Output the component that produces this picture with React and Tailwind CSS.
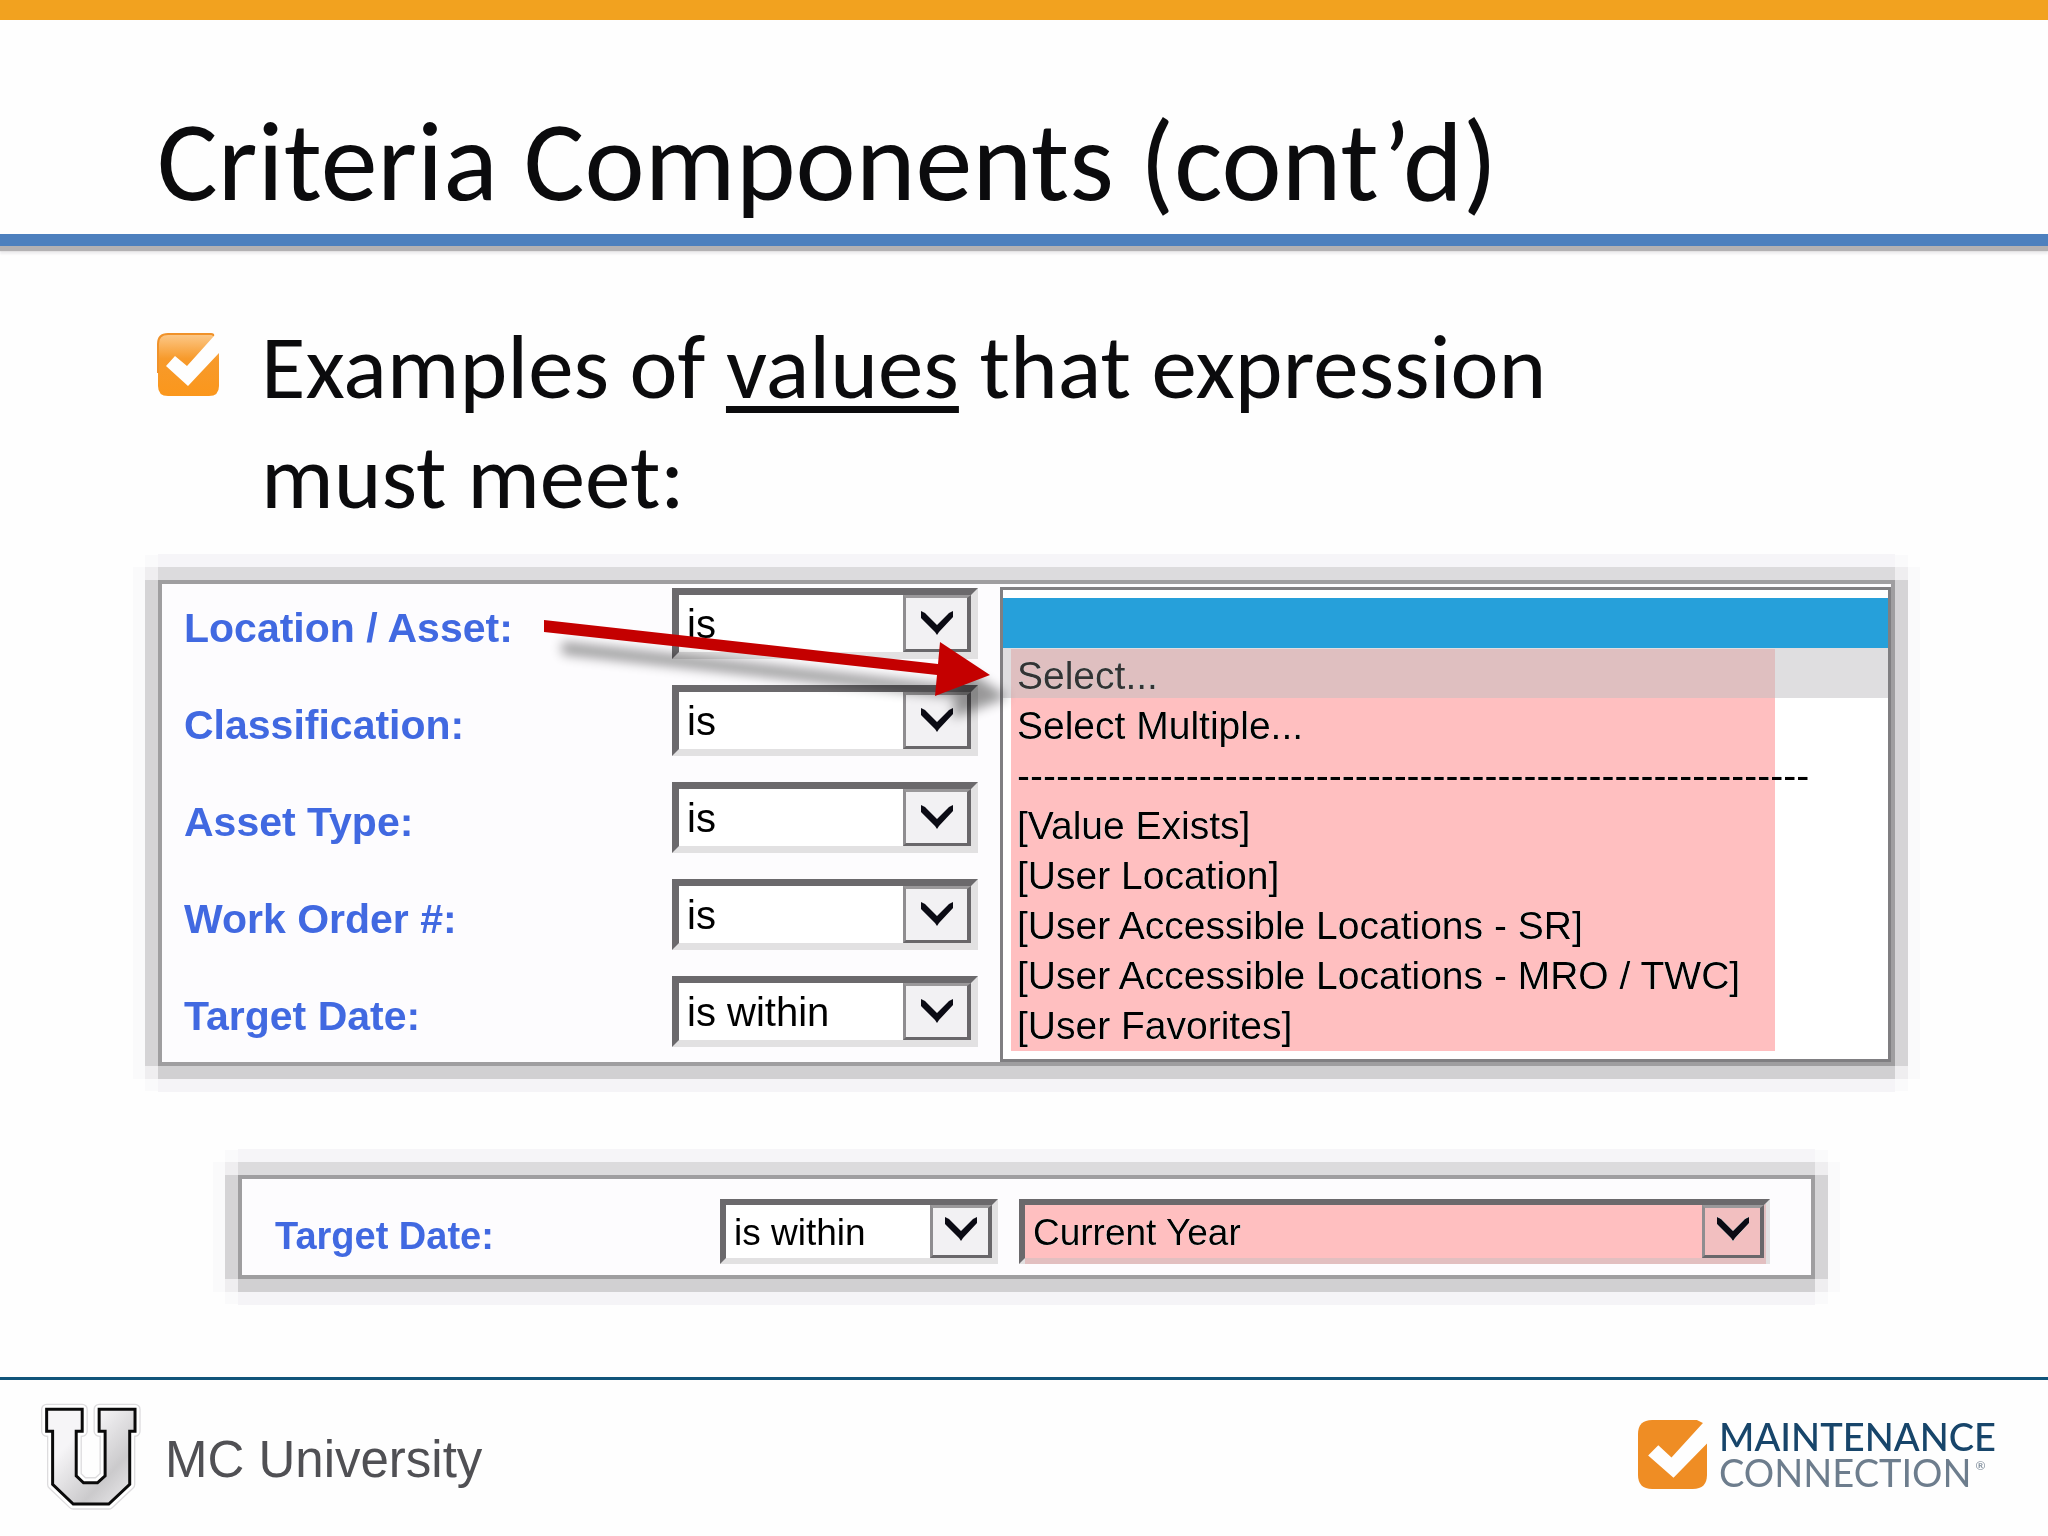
import clsx from 'clsx';

const criteria = [
  { id: 'location', label: 'Location / Asset:', value: 'is' },
  { id: 'classification', label: 'Classification:', value: 'is' },
  { id: 'asset-type', label: 'Asset Type:', value: 'is' },
  { id: 'work-order', label: 'Work Order #:', value: 'is' },
  { id: 'target-date', label: 'Target Date:', value: 'is within' },
];

const options = [
  '',
  'Select...',
  'Select Multiple...',
  '-'.repeat(61),
  '[Value Exists]',
  '[User Location]',
  '[User Accessible Locations - SR]',
  '[User Accessible Locations - MRO / TWC]',
  '[User Favorites]',
];

const Panel = ({ className, children }) => (
  <section
    className={clsx(
      'relative flex bg-[#fdfcfe] shadow-[0_0_0_4px_#9f9ea0,0_13px_0_4px_#d1d0d2,0_-13px_0_4px_#dcdbdd,13px_0_0_4px_#d5d4d6,-13px_0_0_4px_#d5d4d6,0_0_0_17px_#efeef0,0_26px_0_4px_#f5f4f7,0_-26px_0_4px_#f6f5f8,12px_0_0_17px_#fafafb,-12px_0_0_17px_#fafafb,0_12px_0_17px_#fafafb,0_-12px_0_17px_#fafafb]',
      className
    )}
  >
    {children}
  </section>
);

// Sunken drop-down with its own arrow button
const Dropdown = ({ id, label, value, large, className }) => (
  <div
    className={clsx(
      'relative flex border-t-[#6b696c] border-l-[#6b696c] border-r-[#e2e1e2] border-b-[#e2e1e2] bg-white',
      large ? 'h-[71px] border-[7px]' : 'h-[65px] border-[6px]',
      className
    )}
  >
    <select
      id={id}
      aria-label={label}
      defaultValue={value}
      className={clsx(
        'min-w-0 flex-1 appearance-none bg-transparent pl-2 text-black outline-none',
        large ? 'text-[40px] leading-[46px]' : 'pt-0.5 text-[37px] leading-[42px]'
      )}
    >
      <option>{value}</option>
    </select>
    <span
      className={clsx(
        'pointer-events-none flex justify-center border-t-[3px] border-r-4 border-b-[3px] border-l-[3px] border-t-[#9a989a] border-r-[#69676a] border-b-[#69676a] border-l-[#8f8d90] bg-[#f2f1f3]',
        large ? 'w-[68px] pt-3' : 'w-[62px] pt-2'
      )}
    >
      <svg className="h-7 w-9" viewBox="0 0 36 28" fill="#0b0b14">
        <path d="M2 1 L6 3 L18 15 L30 3 L34 1 V7 L20 22 L18 25 L16 22 L2 8 Z" />
      </svg>
    </span>
  </div>
);

const BulletCheck = () => (
  <svg className="mt-[87px] h-16 w-[62px] shrink-0" viewBox="0 0 62 64">
    <defs>
      <linearGradient id="bullet" x1="0" y1="0" x2="0" y2="1">
        <stop offset="0" stopColor="#fcc98a" />
        <stop offset="0.4" stopColor="#f79a2b" />
        <stop offset="1" stopColor="#fb971c" />
      </linearGradient>
    </defs>
    <path
      d="M11 1 H55 Q58 1 57 3 L62 20 V53 Q62 63 52 63 H11 Q1 63 1 53 V11 Q1 1 11 1 Z"
      fill="url(#bullet)"
    />
    <path
      d="M1 40 V11 Q1 1 11 1 H54 Q57 1 56 3"
      fill="none"
      stroke="#f0922a"
      strokeWidth="2"
    />
    <path d="M9 33 L18 23 L30 33 L57 3 L64 0 V18 L31 53 Z" fill="#fefefe" />
  </svg>
);

const UniversityLogo = () => (
  <svg className="h-28 w-[103px]" viewBox="120 125 310 335">
    <defs>
      <linearGradient id="steel" x1="0" y1="0" x2="1" y2="1">
        <stop offset="0.3" stopColor="#f6f5f7" />
        <stop offset="0.7" stopColor="#cbcacc" />
        <stop offset="1" stopColor="#f0eff1" />
      </linearGradient>
      <path
        id="block-u"
        d="M140 149 H247 V215 H229 V349 L251 370 H293 L316 349 V215 H298 V149 H406 V215 H390 V375 L327 434 H220 L158 375 V215 H140 Z"
      />
    </defs>
    <use href="#block-u" fill="none" stroke="#dddcde" strokeWidth="34" strokeLinejoin="round" />
    <use href="#block-u" fill="none" stroke="#fff" strokeWidth="26" strokeLinejoin="round" />
    <use href="#block-u" fill="url(#steel)" stroke="#0a0a0a" strokeWidth="9" />
  </svg>
);

const CompanyLogo = () => (
  <div className="flex gap-3">
    <svg className="mt-1 size-[69px]" viewBox="0 0 68 68">
      <path
        d="M14 0 H58 L64 3 L68 23 V54 Q68 68 54 68 H14 Q0 68 0 54 V14 Q0 0 14 0 Z"
        fill="#ef8d24"
      />
      <path d="M10 35 L20 25 L33 37 L64 3 L70 0 V21 L35 57 Z" fill="#fefefe" />
    </svg>
    <div className="pt-0.5 font-[Lato,sans-serif] text-[38px] leading-9">
      <p className="font-medium text-[#17456a]">MAINTENANCE</p>
      <p className="flex text-[#6d7d8d]">
        CONNECTION<span className="pl-1 text-[12px] leading-6">®</span>
      </p>
    </div>
  </div>
);

// Red pointer from the first label to the option list
const Pointer = () => (
  <svg className="pointer-events-none absolute top-5 left-[370px] h-[130px] w-[500px]" viewBox="0 0 500 130">
    <defs>
      <filter id="pointer-blur" x="-10%" y="-40%" width="120%" height="180%">
        <feGaussianBlur stdDeviation="6" />
      </filter>
      <path id="pointer-shape" d="M12 16 L406 60 L408 38 L458 71 L403 92 L405 71 L12 28 Z" />
    </defs>
    <use href="#pointer-shape" x="18" y="22" fill="#000" opacity="0.4" filter="url(#pointer-blur)" />
    <use href="#pointer-shape" fill="#c40000" />
  </svg>
);

const App = () => {
  return (
    <div className="flex min-h-screen flex-col bg-[#fefefe] font-['Liberation_Sans',Arial,sans-serif]">
      <header className="border-t-[20px] border-[#f2a21f]">
        <h1 className="px-[157px] pt-[81px] pb-[13px] font-[Carlito,Lato,sans-serif] text-[114px] leading-[120px] text-[#0b0b0d]">
          Criteria Components (cont’d)
        </h1>
        <div className="h-3 bg-[#4d80be] shadow-[0_5px_1px_#b3b1b3,0_8px_2px_#eeedef]" />
      </header>

      <main>
        <div className="flex gap-[42px] pl-[157px]">
          <BulletCheck />
          <p className="max-w-[1400px] pt-[66px] font-[Carlito,Lato,sans-serif] text-[91px] leading-[110px] text-[#0b0b0d]">
            Examples of{' '}
            <span className="underline decoration-[7px] underline-offset-[8px]">values</span> that
            expression
            <br />
            must meet:
          </p>
        </div>

        <Panel className="mt-[52px] mr-[157px] ml-[162px] h-[478px]">
          <div className="flex w-[838px] flex-col gap-[26px] pt-1 pl-[22px]">
            {criteria.map(({ id, label, value }) => (
              <div key={id} className="flex">
                <label
                  htmlFor={id}
                  className="w-[488px] pt-[17px] text-[41px] leading-[46px] font-bold text-[#4169e1]"
                >
                  {label}
                </label>
                <Dropdown id={id} value={value} large className="w-[306px]" />
              </div>
            ))}
          </div>
          <div className="relative mt-[3px] flex flex-1 border-[3px] border-[#807f82] bg-white pt-2">
            <select
              size={9}
              aria-label="Location / Asset value"
              className="flex-1 appearance-none overflow-hidden text-[39px] text-black outline-none"
            >
              {options.map((option, i) => (
                <option
                  key={i}
                  className={clsx(
                    'h-[50px] pt-1.5 pr-0 pb-0 pl-[14px]',
                    i === 0 && 'bg-[#26a0da]',
                    i === 1 && 'bg-[#dfdee0] text-[#333]'
                  )}
                >
                  {option}
                </option>
              ))}
            </select>
            <div className="pointer-events-none absolute top-[59px] right-[113px] bottom-2 left-2 bg-[#ffbfc0] mix-blend-darken" />
          </div>
          <Pointer />
        </Panel>

        <Panel className="mt-[117px] mr-[237px] ml-[242px] h-24 items-start pt-5 pr-[41px] pl-[33px]">
          <label
            htmlFor="target-date-value"
            className="w-[445px] pt-4 text-[38px] leading-[42px] font-bold text-[#4169e1]"
          >
            Target Date:
          </label>
          <Dropdown label="Target Date operator" value="is within" className="w-[278px]" />
          <div className="relative ml-[21px] flex flex-1">
            <Dropdown id="target-date-value" value="Current Year" className="flex-1" />
            <div className="pointer-events-none absolute top-[3px] right-1 bottom-0 left-1.5 bg-[#ffbfc0] mix-blend-darken" />
          </div>
        </Panel>
      </main>

      <footer className="mt-auto flex h-[159px] justify-between border-t-[3px] border-[#10547a] pr-[52px] pl-10">
        <div className="flex gap-[22px] pt-[21px]">
          <UniversityLogo />
          <span className="pt-[30px] text-[51px] leading-[58px] text-[#505054]">MC University</span>
        </div>
        <div className="pt-9">
          <CompanyLogo />
        </div>
      </footer>
    </div>
  );
};

export default App;
